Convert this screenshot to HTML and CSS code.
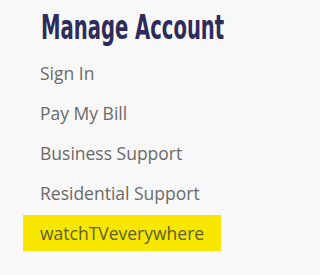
FILE: index.html
```html
<!DOCTYPE html>
<html>
<head>
<meta charset="utf-8">
<link rel="stylesheet" href="styles.css">
</head>
<body>
<nav class="menu">
  <h2 class="menu-title">Manage Account</h2>
  <ul class="menu-list">
    <li class="menu-item"><a href="#">Sign In</a></li>
    <li class="menu-item"><a href="#">Pay My Bill</a></li>
    <li class="menu-item"><a href="#">Business Support</a></li>
    <li class="menu-item"><a href="#">Residential Support</a></li>
    <li class="menu-item menu-item-highlight"><a href="#">watchTVeverywhere</a></li>
  </ul>
</nav>
</body>
</html>
```

FILE: styles.css
```css
html, body {
  margin: 0;
  padding: 0;
  background: #f8f8f8;
}
.menu {
  padding: 10px 0 0 23px;
}
.menu-title {
  display: inline-block;
  margin: 0 0 9px 18px;
  font-family: "DejaVu Sans Condensed", "DejaVu Sans", sans-serif;
  font-weight: bold;
  font-size: 33px;
  line-height: 36px;
  color: #2d2b5c;
  white-space: nowrap;
  transform: scaleX(0.66);
  transform-origin: left center;
}
.menu-list {
  list-style: none;
  margin: 0;
  padding: 0;
  display: flex;
  flex-direction: column;
  align-items: flex-start;
  gap: 4px;
}
.menu-item {
  height: 36px;
}
.menu-item a {
  display: block;
  padding: 0 17px;
  font-family: "Open Sans", sans-serif;
  font-size: 17.5px;
  line-height: 36px;
  color: #6a6a6a;
  text-decoration: none;
  white-space: nowrap;
}
.menu-item-highlight {
  width: 198px;
  background: #f6e600;
}
.menu-item-highlight a {
  color: #5f5f2a;
}
```
